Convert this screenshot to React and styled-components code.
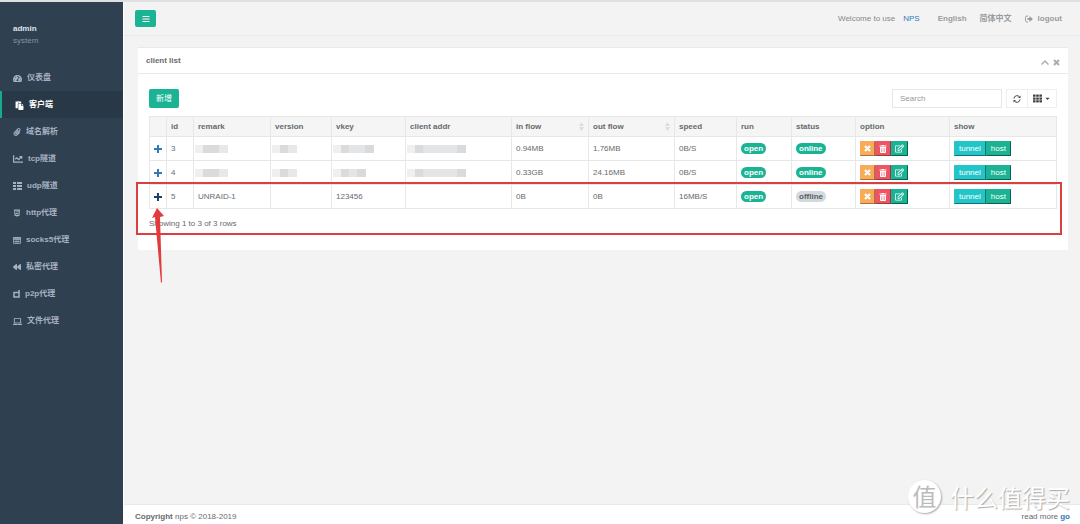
import React from "react";
import styled, { createGlobalStyle, css } from "styled-components";
import {
  FaBackward,
  FaBars,
  FaCaretDown,
  FaChartLine,
  FaHtml5,
  FaLaptop,
  FaPaperclip,
  FaPaste,
  FaRegEdit,
  FaTachometerAlt,
  FaTh,
  FaTrashAlt
} from "react-icons/fa";

const GlobalStyle = createGlobalStyle`
  * {
    box-sizing: border-box;
  }
  body {
    margin: 0;
    background: #f3f3f4;
    color: #676a6c;
    font-family: "Liberation Sans", Arial, "Noto Sans CJK SC", sans-serif;
    font-size: 8px;
    line-height: 12px;
  }
  button, input {
    font: inherit;
  }
  a {
    color: inherit;
    text-decoration: none;
  }
  svg {
    display: block;
    flex: none;
  }
`;

const Shell = styled.div`
  position: relative;
  display: flex;
  min-height: 100vh;
  border-top: 2px solid #dfe0e1;
`;

const Sidebar = styled.nav`
  width: 124px;
  flex: none;
  background: #2f4050;
  border-right: 1px solid #fff;
`;

const Profile = styled.div`
  padding: 21px 13px 17px;
  color: #8095a8;
  strong {
    display: block;
    color: #dfe4ed;
  }
`;

const Menu = styled.ul`
  list-style: none;
  margin: 0;
  padding: 0;
`;

const MenuLink = styled.a`
  display: flex;
  align-items: center;
  gap: 5px;
  height: 27px;
  padding: 1px 0 0 13px;
  color: #a7b1c2;
  font-weight: 600;
  ${props =>
    props.$active &&
    css`
      color: #fff;
      background: #293846;
      border-left: 2px solid #19aa8d;
    `}
`;

const Main = styled.div`
  flex: 1;
  min-width: 0;
  display: flex;
  flex-direction: column;
`;

const Header = styled.header`
  display: flex;
  align-items: center;
  justify-content: space-between;
  height: 34px;
  padding: 0 18px 0 11px;
  border-bottom: 1px solid #e7eaec;
`;

const MenuToggle = styled.button`
  display: flex;
  align-items: center;
  justify-content: center;
  width: 21px;
  height: 17px;
  padding: 0;
  border: 0;
  border-radius: 2px;
  background: #1ab394;
  color: #fff;
`;

const TopLinks = styled.div`
  display: flex;
  align-items: center;
  gap: 13px;
  color: #888;
  a {
    display: flex;
    align-items: center;
    gap: 5px;
    color: #999c9e;
    font-weight: 600;
  }
`;

const Welcome = styled.span`
  display: flex;
  gap: 8px;
  margin-right: 5px;
  a {
    color: #337ab7;
    font-weight: 400;
  }
`;

const Panel = styled.section`
  position: relative;
  margin: 11px 12px 0 14px;
  background: #fff;
  border-top: 1px solid #e7eaec;
`;

const PanelTitle = styled.div`
  display: flex;
  align-items: center;
  justify-content: space-between;
  height: 26px;
  padding: 0 8px;
  border-bottom: 1px solid #e7eaec;
  h5 {
    margin: 0;
    font-size: 8px;
    font-weight: 600;
  }
`;

const PanelTools = styled.div`
  display: flex;
  gap: 4px;
  padding-top: 4px;
  button {
    padding: 0;
    border: 0;
    background: none;
    color: #acacac;
  }
`;

const PanelBody = styled.div`
  padding: 15px 11px 20px;
`;

const Toolbar = styled.div`
  display: flex;
  align-items: center;
  height: 19px;
  margin-bottom: 8px;
`;

const AddButton = styled.button`
  height: 19px;
  width: 30px;
  padding: 0;
  margin-right: auto;
  border: 0;
  border-radius: 2px;
  background: #1ab394;
  color: #fff;
`;

const Search = styled.input`
  width: 110px;
  height: 19px;
  margin-right: 4px;
  padding: 0 7px;
  border: 1px solid #e5e6e7;
  color: #676a6c;
  &::placeholder {
    color: #999;
  }
`;

const ToolButton = styled.button`
  display: flex;
  align-items: center;
  justify-content: center;
  gap: 2px;
  width: ${props => props.$width}px;
  height: 19px;
  padding: 0;
  border: 1px solid #eeeff0;
  background: #fff;
  color: #444;
  & + & {
    border-left: 0;
  }
`;

const Table = styled.table`
  width: 100%;
  table-layout: fixed;
  border-collapse: collapse;
  th,
  td {
    height: 24px;
    padding: 0 4px;
    border: 1px solid #e7e7e7;
    text-align: left;
    white-space: nowrap;
  }
  th {
    height: 20px;
    background: #f5f5f6;
    font-weight: 700;
  }
`;

const Sortable = styled.span`
  display: flex;
  align-items: center;
  justify-content: space-between;
`;

const Expand = styled.button`
  display: block;
  margin: 0 auto;
  padding: 0;
  border: 0;
  background: none;
  color: ${props => (props.$focused ? "#1d4466" : "#337ab7")};
`;

const Badge = styled.span`
  display: inline-block;
  height: 11px;
  padding: 0 3px;
  border-radius: 6px;
  background: ${props => (props.$muted ? "#d1dade" : "#1ab394")};
  color: ${props => (props.$muted ? "#5e5e5e" : "#fff")};
  font-weight: 600;
  line-height: 11px;
  vertical-align: middle;
`;

const ButtonGroup = styled.div`
  display: flex;
`;

const tones = {
  warning: "#f8ac59",
  danger: "#ed5565",
  primary: "#1ab394",
  info: "#23c6c8"
};

const ActionButton = styled.button`
  display: flex;
  align-items: center;
  justify-content: center;
  height: 15px;
  padding: 0 ${props => (props.$icon ? 3 : 4)}px;
  border: 1px outset ${props => tones[props.$tone]};
  background: ${props => tones[props.$tone]};
  color: #fff;
`;

const Censored = styled.span`
  display: flex;
  width: ${props => props.$width}px;
  height: 8px;
  margin-left: -3px;
  background: linear-gradient(
    to right,
    #efefef 0 8px,
    #dadbdc 8px ${props => props.$dark || 16}px,
    #e4e5e6 ${props => props.$dark || 16}px calc(100% - 9px),
    ${props => (props.$light ? "#e8e8e8" : "#d9dadb")} calc(100% - 9px)
  );
`;

const Summary = styled.div`
  margin-top: 9px;
`;

const Footer = styled.footer`
  display: flex;
  align-items: center;
  justify-content: space-between;
  height: 20px;
  margin-top: auto;
  padding: 4px 10px 0 11px;
  background: #fff;
  border-top: 1px solid #e7eaec;
  a {
    color: #337ab7;
    font-weight: 700;
  }
`;

const Highlight = styled.div`
  position: absolute;
  top: 134px;
  right: 6px;
  left: -2px;
  height: 53px;
  border: 2px solid #d9403f;
  pointer-events: none;
`;

const Arrow = styled.svg`
  position: absolute;
  top: 160px;
  left: 13px;
  pointer-events: none;
`;

const Watermark = styled.div`
  position: absolute;
  right: 10px;
  bottom: 11px;
  display: flex;
  align-items: center;
  gap: 9px;
  color: #fff;
  font-family: "Noto Sans CJK SC", sans-serif;
  font-size: 24px;
  line-height: 32px;
  text-shadow: 1px 1px 1px #aaa;
  pointer-events: none;
`;

const WatermarkLogo = styled.span`
  width: 33px;
  height: 33px;
  border-radius: 50%;
  background: #fff;
  box-shadow: 1px 1px 2px #aaa;
  color: #bbb;
  text-align: center;
  text-shadow: none;
`;

const PlusIcon = () => (
  <svg width="8" height="8" viewBox="0 0 8 8" fill="currentColor">
    <path d="M3 0h2v3h3v2H5v3H3V5H0V3h3z" />
  </svg>
);

const CrossIcon = () => (
  <svg width="7" height="7" viewBox="0 0 14 14" stroke="currentColor" strokeWidth="4">
    <path d="M2 2l10 10M12 2 2 12" />
  </svg>
);

const ChevronIcon = () => (
  <svg width="8" height="7" viewBox="0 0 16 14" fill="none" stroke="currentColor" strokeWidth="3">
    <path d="M1 11l7-7 7 7" />
  </svg>
);

const SortIcon = () => (
  <svg width="5" height="9" viewBox="0 0 5 9" fill="#dcdddd">
    <path d="M2.5 0 5 4H0zM0 5h5L2.5 9z" />
  </svg>
);

const RefreshIcon = () => (
  <svg width="8" height="8" viewBox="0 0 16 16" fill="none" stroke="currentColor" strokeWidth="2">
    <path d="M2 7a6 6 0 0 1 11-3M14 9a6 6 0 0 1-11 3" />
    <path d="M15 1v5h-5zM1 15v-5h5z" fill="currentColor" stroke="none" />
  </svg>
);

const LogoutIcon = () => (
  <svg width="8" height="8" viewBox="0 0 16 16" fill="none" stroke="currentColor" strokeWidth="2">
    <path d="M6 2H4a3 3 0 0 0-3 3v6a3 3 0 0 0 3 3h2" />
    <path d="M5 6h4V2l7 6-7 6v-4H5z" fill="currentColor" stroke="none" />
  </svg>
);

const ListIcon = () => (
  <svg width="9" height="8" viewBox="0 0 9 8" fill="currentColor">
    <path d="M0 0h3v2H0zM4 0h5v2H4zM0 3h3v2H0zM4 3h5v2H4zM0 6h3v2H0zM4 6h5v2H4z" />
  </svg>
);

const GridIcon = () => (
  <svg width="8" height="7" viewBox="0 0 16 14" fill="none" stroke="currentColor">
    <path d="M1 1h14v12H1zM1 5h14M1 9h14M6 3v10M10 3v10" strokeWidth="1.5" />
    <path d="M0 2h16" strokeWidth="3" />
  </svg>
);

const PeerIcon = () => (
  <svg width="7" height="8" viewBox="0 0 14 16" fill="none" stroke="currentColor" strokeWidth="3">
    <path d="M2 5h10v9H2zM12 5V0" />
  </svg>
);

const menu = [
  { label: "仪表盘", icon: <FaTachometerAlt size={9} /> },
  { label: "客户端", icon: <FaPaste size={9} />, active: true },
  { label: "域名解析", icon: <FaPaperclip size={8} /> },
  { label: "tcp隧道", icon: <FaChartLine size={10} /> },
  { label: "udp隧道", icon: <ListIcon /> },
  { label: "http代理", icon: <FaHtml5 size={8} /> },
  { label: "socks5代理", icon: <GridIcon /> },
  { label: "私密代理", icon: <FaBackward size={8} /> },
  { label: "p2p代理", icon: <PeerIcon /> },
  { label: "文件代理", icon: <FaLaptop size={9} /> }
];

const columns = [
  { label: "", width: 17 },
  { label: "id", width: 27 },
  { label: "remark", width: 77 },
  { label: "version", width: 61 },
  { label: "vkey", width: 74 },
  { label: "client addr", width: 106 },
  { label: "in flow", width: 77, sortable: true },
  { label: "out flow", width: 86, sortable: true },
  { label: "speed", width: 62 },
  { label: "run", width: 55 },
  { label: "status", width: 64 },
  { label: "option", width: 94 },
  { label: "show", width: 107 }
];

const Col = styled.col`
  width: ${props => props.$width}px;
`;

const clients = [
  { id: 3, vkeyWidth: 41, inFlow: "0.94MB", outFlow: "1.76MB", speed: "0B/S", online: true },
  { id: 4, vkeyWidth: 33, inFlow: "0.33GB", outFlow: "24.16MB", speed: "0B/S", online: true },
  {
    id: 5,
    remark: "UNRAID-1",
    vkey: "123456",
    inFlow: "0B",
    outFlow: "0B",
    speed: "16MB/S",
    online: false
  }
];

const ClientRow = ({ client }) => {
  const hidden = !client.remark;

  return (
    <tr>
      <td>
        <Expand aria-label="expand" $focused={client.id === 5}>
          <PlusIcon />
        </Expand>
      </td>
      <td>{client.id}</td>
      <td>{hidden ? <Censored $width={33} $dark={24} $light /> : client.remark}</td>
      <td>{hidden ? <Censored $width={25} $light /> : null}</td>
      <td>{hidden ? <Censored $width={client.vkeyWidth} /> : client.vkey}</td>
      <td>{hidden ? <Censored $width={59} /> : null}</td>
      <td>{client.inFlow}</td>
      <td>{client.outFlow}</td>
      <td>{client.speed}</td>
      <td>
        <Badge>open</Badge>
      </td>
      <td>
        <Badge $muted={!client.online}>{client.online ? "online" : "offline"}</Badge>
      </td>
      <td>
        <ButtonGroup>
          <ActionButton $icon $tone="warning" aria-label="close">
            <CrossIcon />
          </ActionButton>
          <ActionButton $icon $tone="danger" aria-label="delete">
            <FaTrashAlt size={8} />
          </ActionButton>
          <ActionButton $icon $tone="primary" aria-label="edit">
            <FaRegEdit size={9} />
          </ActionButton>
        </ButtonGroup>
      </td>
      <td>
        <ButtonGroup>
          <ActionButton $tone="info">tunnel</ActionButton>
          <ActionButton $tone="primary">host</ActionButton>
        </ButtonGroup>
      </td>
    </tr>
  );
};

const App = () => (
  <Shell>
    <GlobalStyle />
    <Sidebar>
      <Profile>
        <strong>admin</strong>
        system
      </Profile>
      <Menu>
        {menu.map(item => (
          <li key={item.label}>
            <MenuLink href="#" $active={item.active}>
              {item.icon}
              <span>{item.label}</span>
            </MenuLink>
          </li>
        ))}
      </Menu>
    </Sidebar>
    <Main>
      <Header>
        <MenuToggle aria-label="menu">
          <FaBars size={8} />
        </MenuToggle>
        <TopLinks>
          <Welcome>
            Welcome to use <a href="#">NPS</a>
          </Welcome>
          <a href="#">English</a>
          <a href="#">简体中文</a>
          <a href="#">
            <LogoutIcon />
            logout
          </a>
        </TopLinks>
      </Header>
      <Panel>
        <PanelTitle>
          <h5>client list</h5>
          <PanelTools>
            <button aria-label="collapse">
              <ChevronIcon />
            </button>
            <button aria-label="close">
              <CrossIcon />
            </button>
          </PanelTools>
        </PanelTitle>
        <PanelBody>
          <Toolbar>
            <AddButton>新增</AddButton>
            <Search type="text" placeholder="Search" aria-label="Search" />
            <ToolButton $width={22} aria-label="refresh">
              <RefreshIcon />
            </ToolButton>
            <ToolButton $width={29} aria-label="columns">
              <FaTh size={9} />
              <FaCaretDown size={7} />
            </ToolButton>
          </Toolbar>
          <Table>
            <colgroup>
              {columns.map(column => (
                <Col key={column.label} $width={column.width} />
              ))}
            </colgroup>
            <thead>
              <tr>
                {columns.map(column => (
                  <th key={column.label}>
                    {column.sortable ? (
                      <Sortable>
                        {column.label}
                        <SortIcon />
                      </Sortable>
                    ) : (
                      column.label
                    )}
                  </th>
                ))}
              </tr>
            </thead>
            <tbody>
              {clients.map(client => (
                <ClientRow key={client.id} client={client} />
              ))}
            </tbody>
          </Table>
          <Summary>Showing 1 to 3 of 3 rows</Summary>
        </PanelBody>
        <Highlight />
        <Arrow width="14" height="76" viewBox="0 0 14 76" fill="#e23b3b">
          <path d="M6 0 1 10l3-1 6 66 1-1L9 9l4-1z" />
        </Arrow>
      </Panel>
      <Footer>
        <span>
          <strong>Copyright</strong> nps © 2018-2019
        </span>
        <span>
          read more <a href="#">go</a>
        </span>
      </Footer>
    </Main>
    <Watermark>
      <WatermarkLogo>值</WatermarkLogo>
      什么值得买
    </Watermark>
  </Shell>
);

export default App;
